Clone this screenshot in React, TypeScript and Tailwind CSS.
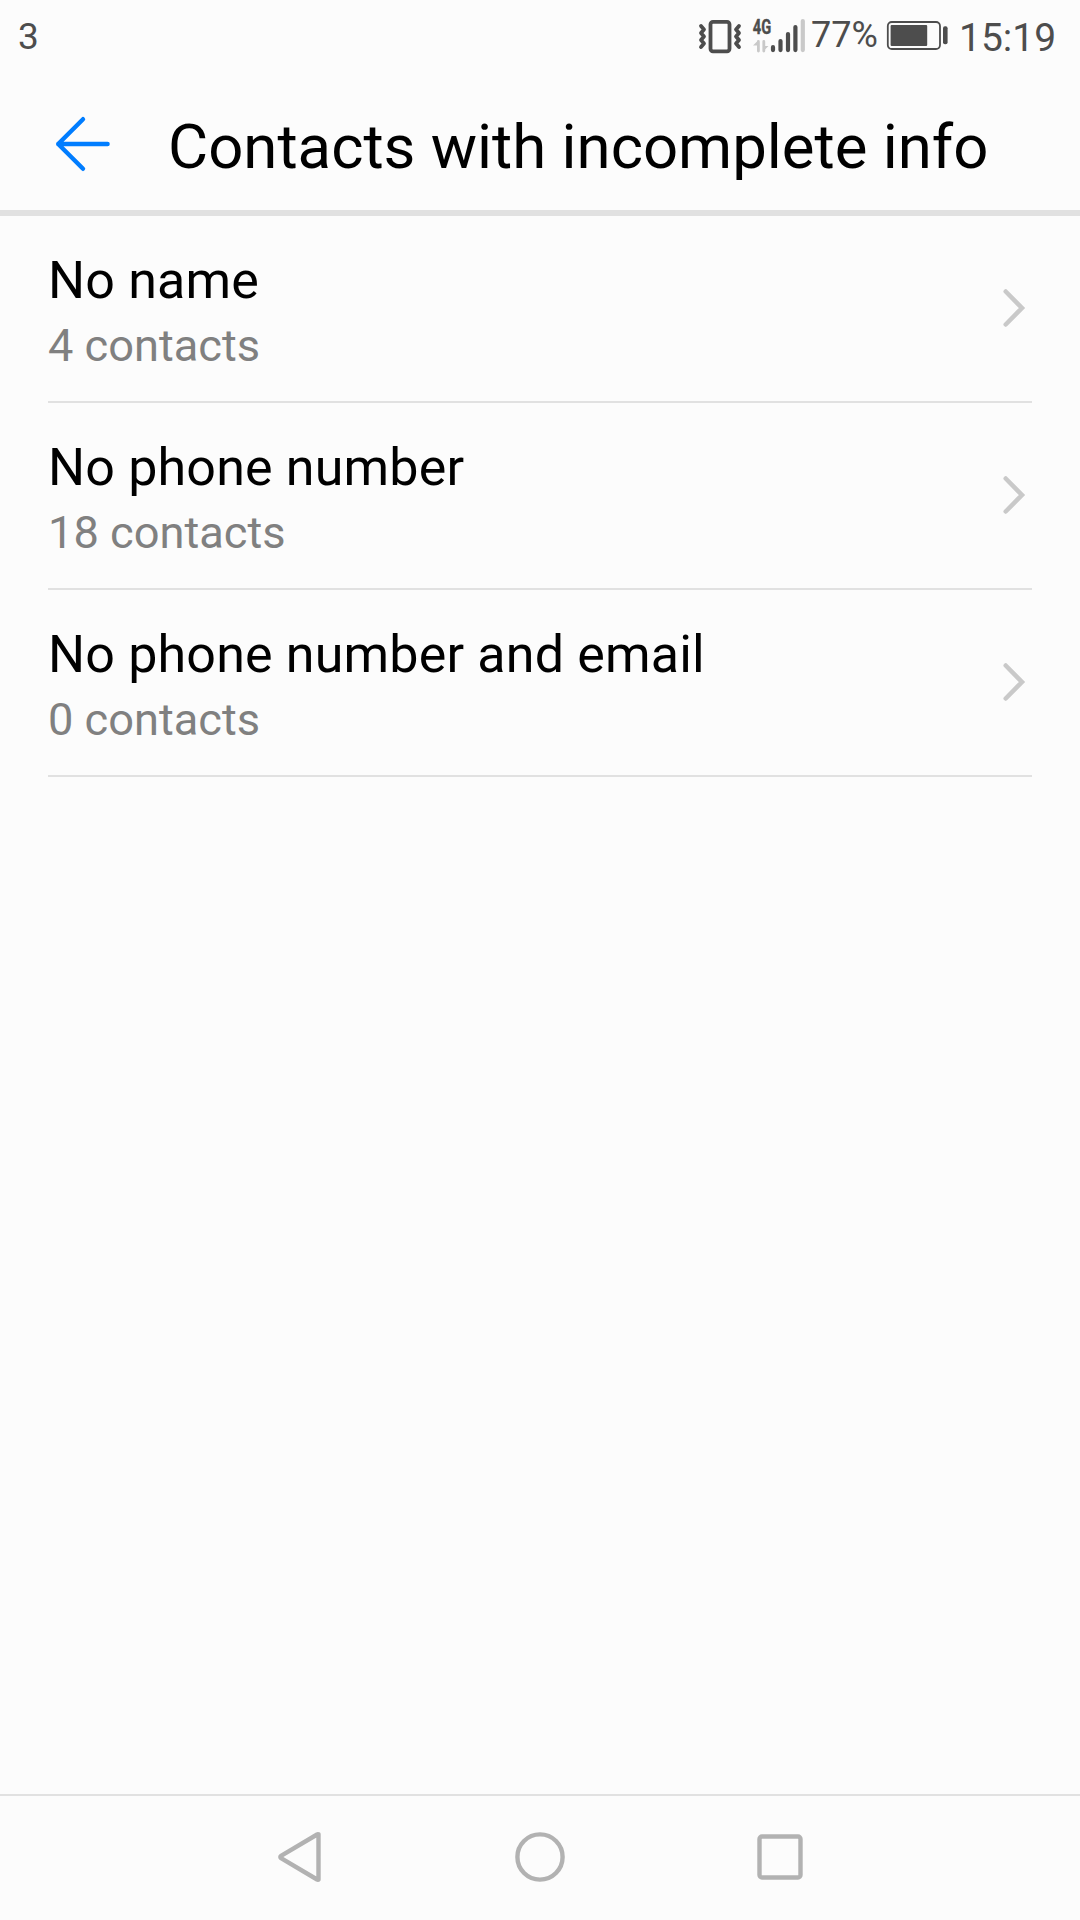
const groups = [
  { title: "No name", count: "4 contacts" },
  { title: "No phone number", count: "18 contacts" },
  { title: "No phone number and email", count: "0 contacts" },
];

function VibrateIcon() {
  return (
    <svg className="mt-[19px] h-[35px] w-[44px] shrink-0" viewBox="698 19 44 35" fill="none" stroke="#4d4d4d">
      <rect x="710.5" y="21.8" width="19" height="29.5" rx="2.5" strokeWidth="3.8" />
      <path d="M701 26l3 3.5-3 3.5 3 3.5-3 3.5 3 3.5-3 3.5" strokeWidth="3.8" strokeLinecap="round" strokeLinejoin="round" />
      <path d="M739 26l-3 3.5 3 3.5-3 3.5 3 3.5-3 3.5 3 3.5" strokeWidth="3.8" strokeLinecap="round" strokeLinejoin="round" />
    </svg>
  );
}

function SignalIcon() {
  return (
    <svg className="ml-[10px] mt-[14px] h-[40px] w-[54px] shrink-0" viewBox="752 14 54 40" fill="none" strokeLinecap="round">
      <text
        x="752.8"
        y="34"
        textLength="18.4"
        lengthAdjust="spacingAndGlyphs"
        fontSize="20.5"
        fontWeight="700"
        fill="#4d4d4d"
        stroke="#4d4d4d"
        strokeWidth="0.4"
      >
        4G
      </text>
      <path d="M758.4 51V41.5M763.8 41.5V51" stroke="#c9c9c9" strokeWidth="2.8" />
      <path d="M753 45.5h5v-5zM768.5 46h-5v5z" fill="#c9c9c9" />
      <path d="M773 47.2v2.9M780.5 41v9.1M788 34v16.1M795.4 27v23.1" stroke="#4d4d4d" strokeWidth="4.2" />
      <path d="M802.8 21v29.1" stroke="#c9c9c9" strokeWidth="4.2" />
    </svg>
  );
}

function BatteryIcon() {
  return (
    <svg className="ml-[10px] mt-[20px] h-[32px] w-[62px] shrink-0" viewBox="886 20 62 32" fill="none">
      <rect x="887.8" y="22" width="52.2" height="27" rx="4" stroke="#4d4d4d" strokeWidth="1.8" />
      <rect x="890.6" y="25" width="36.6" height="21" rx="1" fill="#4d4d4d" />
      <rect x="943" y="26.3" width="4.6" height="18" rx="2" fill="#4d4d4d" />
    </svg>
  );
}

function StatusBar() {
  return (
    <div className="flex h-[72px] items-start justify-between pl-[18px] text-[#4d4d4d]">
      <span className="mt-[16px] text-[37px] leading-[42px]">3</span>
      <div className="flex w-[382px] items-start">
        <VibrateIcon />
        <SignalIcon />
        <span className="ml-[5px] mt-[14px] w-[65px] whitespace-nowrap text-[36px] leading-[42px]">77%</span>
        <BatteryIcon />
        <span className="ml-[11px] mt-[15px] whitespace-nowrap text-[39px] leading-[46px]">15:19</span>
      </div>
    </div>
  );
}

function Header() {
  return (
    <header className="flex h-[144px] items-start border-b-[6px] border-[#e1e1e1]">
      <svg
        className="ml-[54px] mt-[42px] size-[60px]"
        viewBox="54 114 60 60"
        fill="none"
        stroke="#007dff"
        strokeWidth="4.4"
        strokeLinecap="round"
        strokeLinejoin="round"
      >
        <path d="M83 119.2L58.2 144 83 168.8M58.2 144h49.4" />
      </svg>
      <h1 className="ml-[54px] mt-[40px] whitespace-nowrap text-[61.7px] leading-[70px] text-black">
        Contacts with incomplete info
      </h1>
    </header>
  );
}

function GroupRow({ title, count }: { title: string; count: string }) {
  return (
    <li className="mx-[48px] flex h-[187px] items-start justify-between border-b-2 border-[#e1e1e1]">
      <div className="whitespace-nowrap pt-[35px]">
        <p className="text-[52px] leading-[60px] tracking-[0.17px] text-black">{title}</p>
        <p className="mt-[8px] text-[45.2px] leading-[54px] text-[#808080]">{count}</p>
      </div>
      <svg
        className="mr-[6px] mt-[71px] h-[42px] w-[26px]"
        viewBox="1000 287 26 42"
        fill="none"
        stroke="#c9c9c9"
        strokeWidth="4.5"
        strokeLinecap="round"
      >
        <path d="M1005.7 291.5L1022 308l-16.3 16.5" />
      </svg>
    </li>
  );
}

function NavBar() {
  return (
    <nav className="flex h-[126px] items-start border-t-2 border-[#e1e1e1] pt-[34px]">
      <svg
        className="ml-[276px] h-[54px] w-[48px]"
        viewBox="276 1830 48 54"
        fill="none"
        stroke="#b2b2b2"
        strokeWidth="4.4"
        strokeLinejoin="round"
      >
        <path d="M318.5 1834.5v45c0 .3-1 .3-1.4 0L281 1858.2q-1.3-1.2 0-2.4l36.1-21.3c.4-.3 1.4-.3 1.4 0z" />
      </svg>
      <svg className="ml-[189px] size-[54px]" viewBox="0 0 54 54" fill="none" stroke="#b2b2b2" strokeWidth="4.4">
        <circle cx="27" cy="27" r="22.6" />
      </svg>
      <svg className="ml-[186px] size-[54px]" viewBox="753 1830 54 54" fill="none" stroke="#b2b2b2" strokeWidth="4.4">
        <rect x="759.5" y="1836.5" width="41" height="41" rx="2.5" />
      </svg>
    </nav>
  );
}

export default function App() {
  return (
    <div className="flex h-[1920px] w-[1080px] flex-col overflow-hidden bg-[#fcfcfc] font-['Roboto',sans-serif]">
      <StatusBar />
      <Header />
      <ul className="flex-1">
        {groups.map((group) => (
          <GroupRow key={group.title} title={group.title} count={group.count} />
        ))}
      </ul>
      <NavBar />
    </div>
  );
}
